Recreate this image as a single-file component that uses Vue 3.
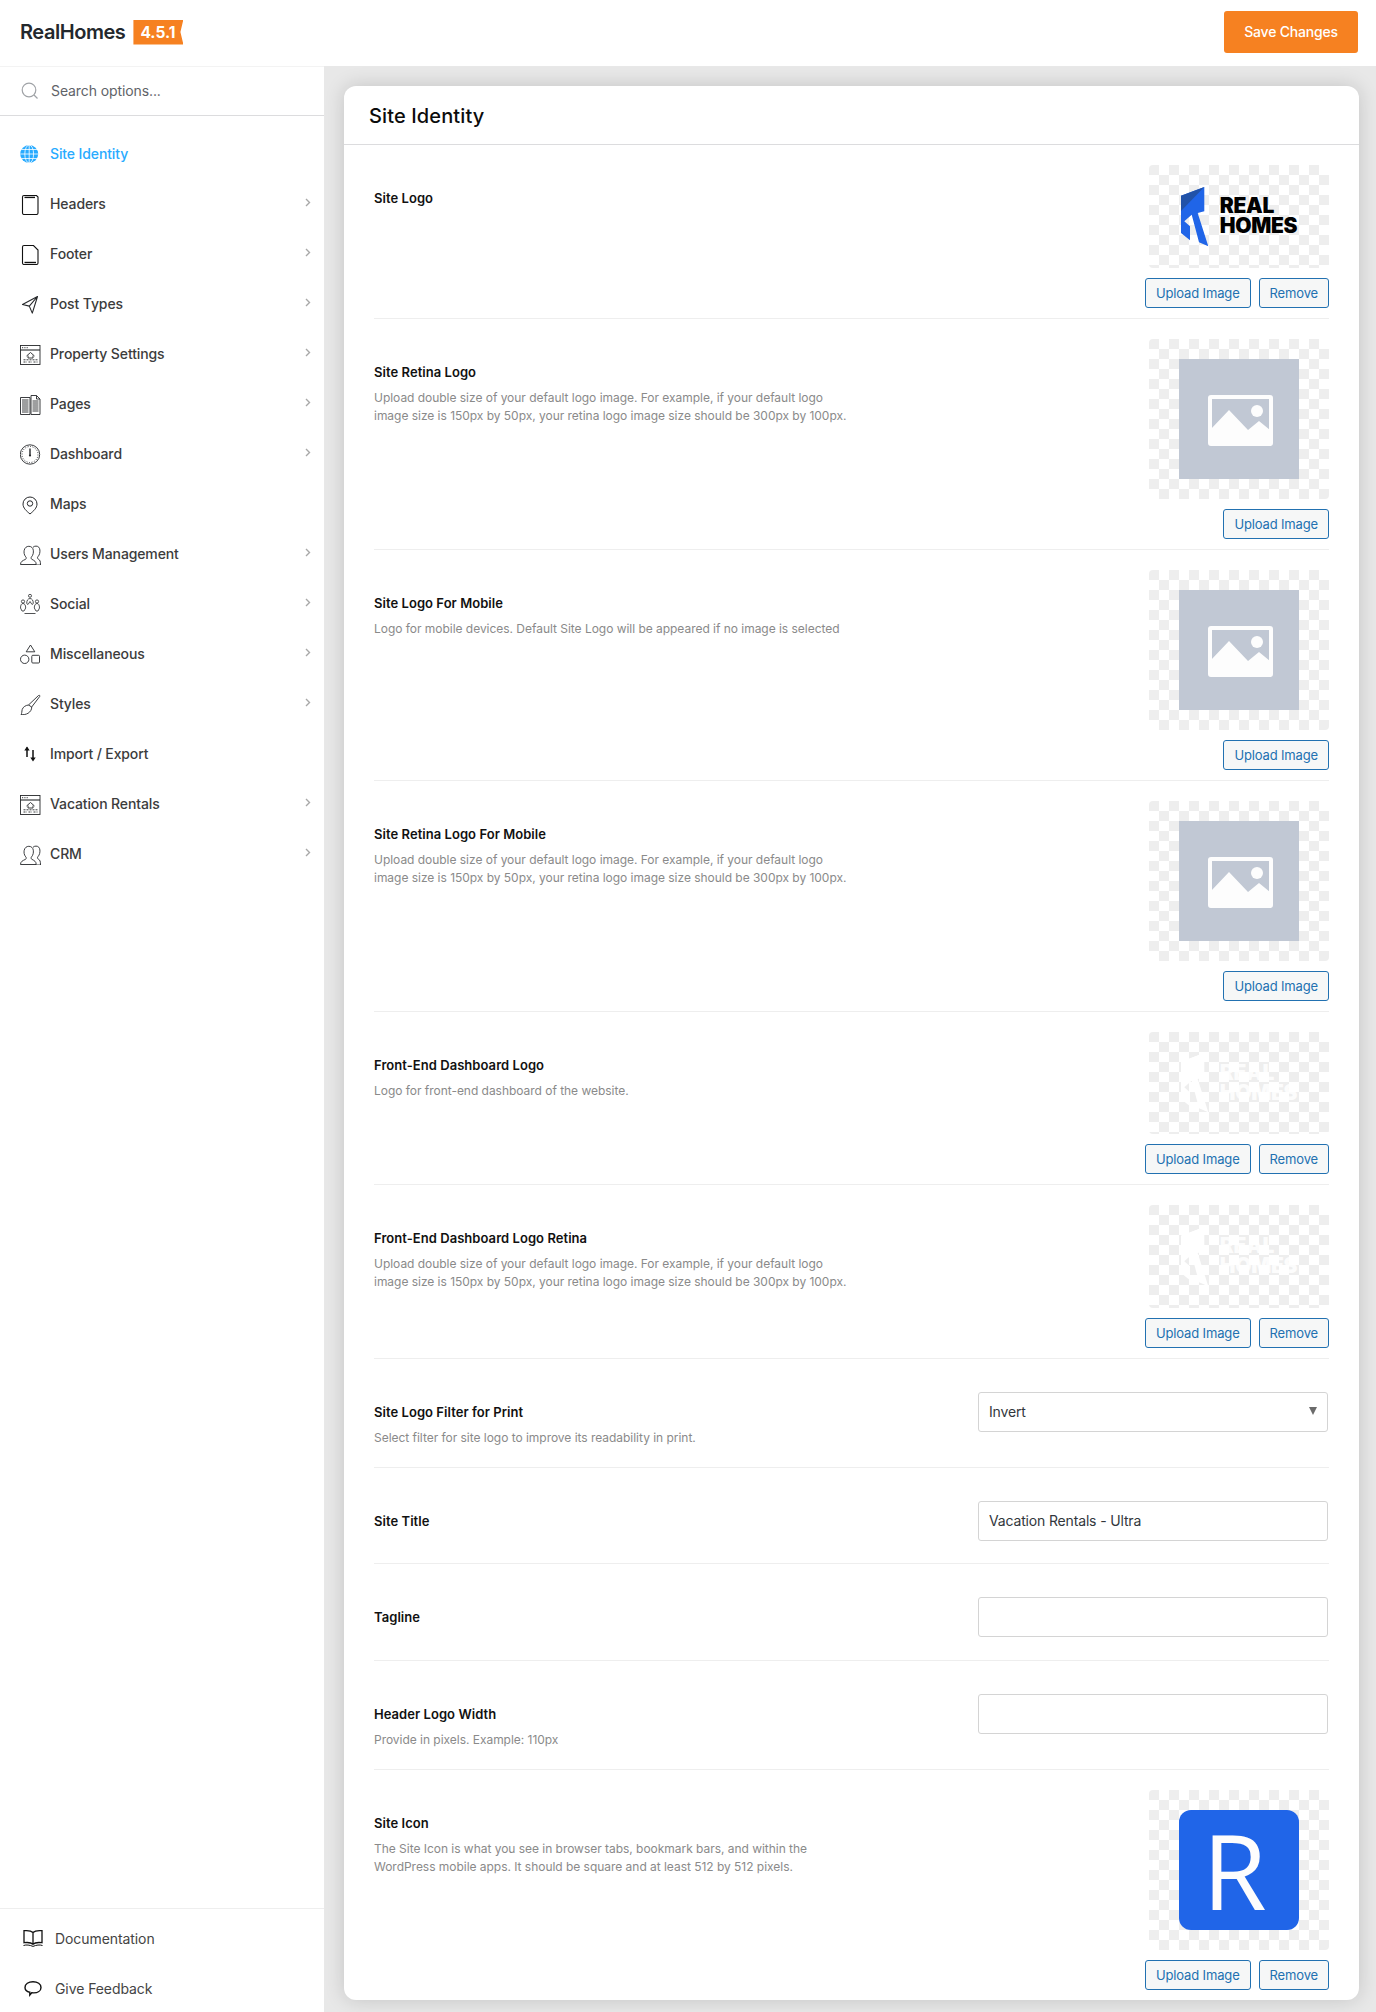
<script setup>
const ink = 'fill="none" stroke="#26282b" stroke-width=".9"'
const house = `<g ${ink}><rect x=".5" y="1.500" width="19.500" height="19"/><path d="M.5 6h19.500" stroke-width="1.100"/><path d="M2 3.700h1.200M4.300 3.700h1.200M6.600 3.700h1.200"/><path d="M6.500 12l4-3.500 4 3.500M8 11.500v2.500h5v-2.500"/><path d="M3.500 15.800h14M3.500 18h3.500M8.500 18h3.500M13.500 18h4" stroke-dasharray="2 1"/></g>`
const users = `<g ${ink}><path d="M.5 20.500c0-3 2-3.700 5-5.200 1-.6 1-1.500.2-2.500C4 10.800 3.800 8.300 4.200 6.300 4.700 3.700 6.700 2.300 8.800 2.300c2.400 0 4.200 1.500 4.500 3.900.3 2.400-.1 4.700-1.700 6.600-.8 1-.7 1.900.3 2.500 2.600 1.500 4.300 2.200 4.300 5.200z"/><path d="M13 3.300c.8-.8 1.900-1.200 3-1.200 2.400 0 3.700 1.700 3.900 3.900.2 2.400-.3 4.800-1.900 6.600-.8 1-.7 1.900.3 2.500 1.700 1 2.200 2 2.200 5.900h-5"/></g>`
const icons = {
  globe: `<circle cx="9.200" cy="10" r="9" fill="#29abff"/><g fill="none" stroke="#fff" stroke-width=".8"><ellipse cx="9.200" cy="10" rx="4.400" ry="9"/><path d="M9.200 1v18M.2 10h18M1.500 5.500h15.400M1.500 14.500h15.400"/></g>`,
  headers: `<path d="M4 1.500h12.500l1.500 1.500v16a1.500 1.500 0 0 1-1.500 1.500H4A1.500 1.500 0 0 1 2.500 19V3A1.500 1.500 0 0 1 4 1.500z" fill="none" stroke="#111" stroke-width="1.100"/><path d="M4.500 2.700h10.500v1.400H4.500z" fill="#111"/>`,
  footer: `<path d="M4 1.500h9.500l4.500 4.500v13a1.500 1.500 0 0 1-1.500 1.500H4A1.500 1.500 0 0 1 2.500 19V3A1.500 1.500 0 0 1 4 1.500z" fill="none" stroke="#111" stroke-width="1.100"/><path d="M4.500 17.800h11.500v1.400H4.500z" fill="#111"/>`,
  plane: `<path d="M17.500 2.500L2.500 10.500l6.800 1.600 3 7zM9.300 12.100l8.200-9.600" fill="none" stroke="#26282b" stroke-width="1.100" stroke-linejoin="round"/>`,
  house,
  pages: `<g ${ink}><path d="M.5 3.500h9.500v17H.5zM11 1.500h5.500l3.500 3.500v15.500h-9z"/><path d="M16.500 1.500v3.500h3.500"/><path d="M2 6h6.500M2 8h6.500M2 10h6.500M2 12h6.500M2 14h6.500M2 16h6.500M2 18h6.500M12.500 7h6M12.500 9h6M12.500 11h6M12.500 13h6M12.500 15h6M12.500 17h6"/></g>`,
  gauge: `<g ${ink}><circle cx="10" cy="10.500" r="9.700"/><circle cx="10" cy="10.500" r="8" stroke-dasharray="1 1.500"/></g><path d="M10 4.500v6.500" stroke="#26282b" stroke-width="1.400"/><circle cx="10" cy="11.500" r="1.100" fill="#26282b"/>`,
  pin: `<path d="M10 20c-3.500-3-7-5.900-7-10a7 7 0 0 1 14 0c0 4.100-3.500 7-7 10z" fill="none" stroke="#26282b" stroke-width="1"/><circle cx="10" cy="9.500" r="2.700" fill="none" stroke="#26282b" stroke-width="1"/>`,
  users,
  social: `<g fill="none" stroke="#26282b" stroke-width=".8"><circle cx="10" cy="1.800" r="1.500"/><path d="M6.700 9.500c0-3 1.200-5 3.300-5s3.300 2 3.300 5l-1.300 1-2-3-2 3z"/><circle cx="3" cy="7.500" r="1.600"/><circle cx="17" cy="7.500" r="1.600"/><path d="M.5 14c0-3 1-4.500 2.500-4.500s2.700 1.500 2.700 4.500l-1.700 3H2zM19.500 14c0-3-1-4.500-2.500-4.500S14.300 11 14.300 14l1.700 3h2zM4.500 19.500h11"/></g>`,
  shapes: `<g ${ink}><path d="M10.500 1l4.300 6.800H6.200z"/><circle cx="4.700" cy="15.300" r="4.200"/><rect x="11.800" y="11.300" width="7.700" height="7.700" rx="1"/></g>`,
  brush: `<g ${ink}><path d="M8.500 11l10-9.500c.8-.6 1.700 0 1.200 1l-8 10.500"/><path d="M8.500 11l3.200 2c.2 2.500-1.500 5-3.700 6.300-2 1.100-4.500 1.700-7 1.200 1-1.200.7-3 1.200-5 .8-2.700 3.800-4.300 6.300-4.500z"/></g>`,
  arrows: `<path d="M7 3.500v9.500M13 6v10" stroke="#111" stroke-width="1.500" fill="none"/><path d="M4.300 6.500L7 2.500l2.700 4zM10.300 13.500l2.700 4 2.700-4z" fill="#111"/>`,
  book: `<path d="M10 4.500C8.500 3 5 2.300 1 2.700v12c3.500-.4 7.500 0 9 1.500 1.500-1.500 5.500-1.900 9-1.500v-12C15 2.300 11.500 3 10 4.500zM10 4.500v12" fill="none" stroke="#111" stroke-width="1.300"/><path d="M.5 17.500c3-1 6-.5 9.500.9 3.500-1.400 6.500-1.900 9.500-.9" fill="none" stroke="#111" stroke-width="1"/>`,
  chat: `<path d="M2 9.500C2 6 5.500 3.700 10 3.700s8 2.300 8 5.800-3.500 5.400-7.300 5.400c-.8 0-1.400 0-2-.1l-1.900 2.300v-2.900C3.700 13.600 2 11.800 2 9.500z" fill="none" stroke="#111" stroke-width="1.400"/>`
}
const nav = [
  ['Site Identity', 'globe', false], ['Headers', 'headers', true], ['Footer', 'footer', true],
  ['Post Types', 'plane', true], ['Property Settings', 'house', true], ['Pages', 'pages', true],
  ['Dashboard', 'gauge', true], ['Maps', 'pin', false], ['Users Management', 'users', true],
  ['Social', 'social', true], ['Miscellaneous', 'shapes', true], ['Styles', 'brush', true],
  ['Import / Export', 'arrows', false], ['Vacation Rentals', 'house', true], ['CRM', 'users', true]
].map(([label, icon, more], i) => ({ label, icon: icons[icon], more, active: i === 0 }))
const retina = 'Upload double size of your default logo image. For example, if your default logo image size is 150px by 50px, your retina logo image size should be 300px by 100px.'
const rows = [
  { title: 'Site Logo', image: 'logo', remove: true },
  { title: 'Site Retina Logo', desc: retina, image: 'empty' },
  { title: 'Site Logo For Mobile', desc: 'Logo for mobile devices. Default Site Logo will be appeared if no image is selected', image: 'empty' },
  { title: 'Site Retina Logo For Mobile', desc: retina, image: 'empty' },
  { title: 'Front-End Dashboard Logo', desc: 'Logo for front-end dashboard of the website.', image: 'ghost', remove: true },
  { title: 'Front-End Dashboard Logo Retina', desc: retina, image: 'ghost', remove: true, tall: true },
  { title: 'Site Logo Filter for Print', desc: 'Select filter for site logo to improve its readability in print.', select: 'Invert' },
  { title: 'Site Title', input: 'Vacation Rentals - Ultra' },
  { title: 'Tagline', input: '' },
  { title: 'Header Logo Width', desc: 'Provide in pixels. Example: 110px', input: '' },
  { title: 'Site Icon', desc: 'The Site Icon is what you see in browser tabs, bookmark bars, and within the WordPress mobile apps. It should be square and at least 512 by 512 pixels.', image: 'icon', remove: true }
]
</script>

<template>
  <div class="app">
    <header class="top">
      <div class="brand"><span class="name">RealHomes</span><span class="version">4.5.1</span></div>
      <button class="save">Save Changes</button>
    </header>
    <div class="body">
      <aside class="side">
        <div class="search">
          <svg width="18" height="18" viewBox="0 0 18 18"><circle cx="8" cy="8" r="6.800" fill="none" stroke="#a0a3a7" stroke-width="1.200"/><path d="M13 13l3.500 3.500" stroke="#a0a3a7" stroke-width="1.200"/></svg>
          <span>Search options...</span>
        </div>
        <nav class="nav">
          <a v-for="item in nav" :key="item.label" class="nav-item" :class="{ active: item.active }">
            <svg class="nav-icon" viewBox="0 0 21 21" v-html="item.icon"></svg>
            <span class="nav-label">{{ item.label }}</span>
            <svg v-if="item.more" class="chev" width="6" height="9" viewBox="0 0 6 9"><path d="M1 1l3.500 3.500L1 8" fill="none" stroke="#a8a8a8" stroke-width="1.400"/></svg>
          </a>
        </nav>
        <div class="side-foot">
          <a class="foot-item"><svg class="foot-icon" viewBox="0 0 20 20" v-html="icons.book"></svg>Documentation</a>
          <a class="foot-item"><svg class="foot-icon" viewBox="0 0 20 20" v-html="icons.chat"></svg>Give Feedback</a>
        </div>
      </aside>
      <main class="main">
        <section class="card">
          <h1 class="card-title">Site Identity</h1>
          <div class="rows">
            <div v-for="row in rows" :key="row.title" class="row" :class="{ 'has-image': row.image }">
              <div class="text">
                <h2 class="label">{{ row.title }}</h2>
                <p v-if="row.desc" class="desc">{{ row.desc }}</p>
              </div>
              <div v-if="row.image" class="media">
                <div class="preview" :class="['p-' + row.image, { tall: row.tall }]">
                  <div v-if="row.image === 'logo' || row.image === 'ghost'" class="logo" :class="{ white: row.image === 'ghost' }">
                    <svg class="mark" width="28" height="60" viewBox="0 0 28 60">
                      <path class="mark-b" d="M23.300 0v24.300l-6.600 1.700 10.600 33.300-9.300-4-7.300-27.600-7.400 6.600L9 39.300v14L0 46V8.700z"/>
                      <path class="mark-a" d="M0 8.700L23.300 0 0 24z"/>
                    </svg>
                    <div class="logo-text">REAL<br>HOMES</div>
                  </div>
                  <div v-else-if="row.image === 'empty'" class="thumb">
                    <svg width="120" height="120" viewBox="0 0 120 120">
                      <rect x="31" y="38" width="61" height="47" rx="1" fill="none" stroke="#fdfdfd" stroke-width="4"/>
                      <circle cx="78" cy="52" r="6" fill="#fdfdfd"/>
                      <path d="M32 70l18-19 19 20 11-9 11 9v14H32z" fill="#fdfdfd"/>
                    </svg>
                  </div>
                  <div v-else class="thumb site-icon">R</div>
                </div>
                <div class="actions">
                  <button class="wp-btn">Upload Image</button>
                  <button v-if="row.remove" class="wp-btn">Remove</button>
                </div>
              </div>
              <div v-else class="field">
                <div v-if="row.select" class="select">{{ row.select }}<i class="caret"></i></div>
                <input v-else class="input" type="text" :value="row.input">
              </div>
            </div>
          </div>
        </section>
      </main>
    </div>
  </div>
</template>

<style scoped>
.app { width: 1376px; height: 2012px; overflow: hidden; font-family: Inter, "Liberation Sans", sans-serif; display: flex; flex-direction: column; color: #3c3c3c; }
.top { height: 66px; flex: none; background: #fff; display: flex; align-items: center; justify-content: space-between; padding: 0 18px 2px 20px; box-sizing: border-box; }
.brand { display: flex; align-items: center; gap: 8px; }
.name { font-size: 20px; font-weight: 600; color: #23282d; letter-spacing: -.45px; }
.version { width: 50px; height: 25px; box-sizing: border-box; padding-left: 7px; background: #f68121; color: #fff; font-size: 15.500px; font-weight: 700; line-height: 25px; clip-path: polygon(0 0, 100% 0, 94% 50%, 100% 100%, 0 100%); }
.save { width: 134px; height: 42px; box-sizing: border-box; padding: 0 0 1px; border: 0; border-radius: 3px; background: #f68121; color: #fff; font: 500 14px Inter, sans-serif; letter-spacing: -.2px; }
.body { flex: 1; display: flex; min-height: 0; }
.side { width: 324px; flex: none; background: #fff; display: flex; flex-direction: column; }
.search { height: 50px; box-sizing: border-box; border-bottom: 1px solid #dcdcde; border-top: 1px solid #f3f3f3; display: flex; align-items: center; gap: 12px; padding: 0 0 1px 21px; font-size: 14px; letter-spacing: -.1px; color: #5f6368; }
.nav { padding-top: 13px; display: flex; flex-direction: column; }
.nav-item { height: 50px; box-sizing: border-box; display: flex; align-items: center; padding: 0 13px 2px 20px; color: #3c3c3c; font-size: 14px; font-weight: 500; letter-spacing: -.12px; }
.nav-item.active { color: #29abff; }
.nav-icon { width: 21px; height: 21px; flex: none; margin-right: 9px; margin-top: 2px; }
.nav-label { flex: 1; }
.chev { margin-top: -1px; }
.side-foot { margin-top: auto; height: 104px; flex: none; box-sizing: border-box; border-top: 1px solid #eee; padding-top: 4px; }
.foot-item { height: 50px; display: flex; align-items: center; gap: 12px; padding-left: 23px; font-size: 14px; letter-spacing: -.08px; color: #444; }
.foot-icon { width: 20px; height: 20px; flex: none; }
.main { flex: 1; min-width: 0; background: #e8e8e8; padding: 20px 17px 0 20px; }
.card { height: 1914px; box-sizing: border-box; background: #fff; border-radius: 12px; box-shadow: 0 0 20px rgba(0, 0, 0, .16); overflow: hidden; }
.card-title { margin: 0; height: 59px; box-sizing: border-box; border-bottom: 1px solid #dcdcde; padding: 0 25px; font-size: 20px; font-weight: 500; line-height: 60px; letter-spacing: .12px; color: #0b0b0b; }
.rows { padding: 0 30px; }
.row { display: flex; justify-content: space-between; padding: 20px 0; border-bottom: 1px solid #eee; }
.row:nth-child(9) { padding-bottom: 21px; }
.row:last-child { border-bottom: 0; }
.row.has-image { padding-bottom: 10px; }
.text { max-width: 480px; padding-top: 24px; }
.label { margin: 0; font-size: 13px; line-height: 18px; font-weight: 600; letter-spacing: .05px; color: #111; }
.desc { margin: 8px 0 0; font-size: 12px; line-height: 18px; letter-spacing: -.03px; color: #8a8a8a; }
.media { display: flex; flex-direction: column; align-items: flex-end; gap: 10px; }
.preview { width: 180px; height: 160px; border-radius: 4px; display: flex; align-items: center; justify-content: center; background: repeating-conic-gradient(#fff 0 25%, #eee 0 50%) 0 0 / 20px 20px; }
.p-logo { height: 103px; }
.p-ghost { height: 102px; }
.p-ghost.tall { height: 103px; }
.thumb { width: 120px; height: 120px; background: #c1c8d4; }
.site-icon { box-sizing: border-box; padding-right: 9px; background: #2065e8; border-radius: 12px; color: #fdfdfd; text-align: center; font: 400 104px/120px "Open Sans", sans-serif; }
.logo { display: flex; align-items: center; gap: 11px; }
.mark-a { fill: #2152a8; }
.mark-b { fill: #2065e8; }
.logo-text { color: #000; font-size: 21px; line-height: 20px; font-weight: 900; letter-spacing: -.3px; margin-top: -1px; }
.logo.white .mark-a, .logo.white .mark-b { fill: #fff; }
.logo.white .logo-text { color: #fff; opacity: .85; }
.actions { display: flex; gap: 8px; }
.wp-btn { height: 30px; box-sizing: border-box; padding: 0 10px; border: 1px solid #2271b1; border-radius: 3px; background: #f6f7f7; color: #2271b1; font: 400 13px Inter, sans-serif; letter-spacing: -.15px; }
.field { width: 350px; padding: 13px 0 2px; margin-right: 1px; }
.select, .input { display: block; width: 100%; height: 40px; box-sizing: border-box; border: 1px solid #d4d4d4; border-radius: 3px; background: #fff; padding: 0 10px; font: 400 14px/37px Inter, sans-serif; letter-spacing: -.16px; color: #32373c; outline: 0; }
.input { padding-bottom: 2px; }
.select { position: relative; }
.caret { position: absolute; right: 10px; top: 14px; width: 0; height: 0; border: 4px solid transparent; border-top: 8px solid #6b6b6b; border-bottom: 0; }
</style>
